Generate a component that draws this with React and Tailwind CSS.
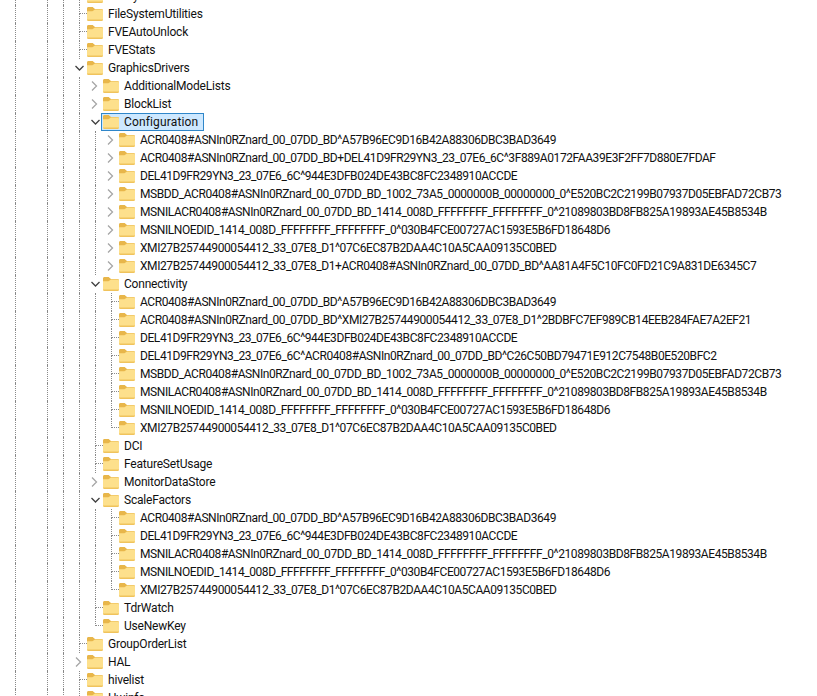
const configKeys = [
  'ACR0408#ASNIn0RZnard_00_07DD_BD^A57B96EC9D16B42A88306DBC3BAD3649',
  'ACR0408#ASNIn0RZnard_00_07DD_BD+DEL41D9FR29YN3_23_07E6_6C^3F889A0172FAA39E3F2FF7D880E7FDAF',
  'DEL41D9FR29YN3_23_07E6_6C^944E3DFB024DE43BC8FC2348910ACCDE',
  'MSBDD_ACR0408#ASNIn0RZnard_00_07DD_BD_1002_73A5_0000000B_00000000_0^E520BC2C2199B07937D05EBFAD72CB73',
  'MSNILACR0408#ASNIn0RZnard_00_07DD_BD_1414_008D_FFFFFFFF_FFFFFFFF_0^21089803BD8FB825A19893AE45B8534B',
  'MSNILNOEDID_1414_008D_FFFFFFFF_FFFFFFFF_0^030B4FCE00727AC1593E5B6FD18648D6',
  'XMI27B25744900054412_33_07E8_D1^07C6EC87B2DAA4C10A5CAA09135C0BED',
  'XMI27B25744900054412_33_07E8_D1+ACR0408#ASNIn0RZnard_00_07DD_BD^AA81A4F5C10FC0FD21C9A831DE6345C7',
];

const connectivityKeys = [
  'ACR0408#ASNIn0RZnard_00_07DD_BD^A57B96EC9D16B42A88306DBC3BAD3649',
  'ACR0408#ASNIn0RZnard_00_07DD_BD^XMI27B25744900054412_33_07E8_D1^2BDBFC7EF989CB14EEB284FAE7A2EF21',
  'DEL41D9FR29YN3_23_07E6_6C^944E3DFB024DE43BC8FC2348910ACCDE',
  'DEL41D9FR29YN3_23_07E6_6C^ACR0408#ASNIn0RZnard_00_07DD_BD^C26C50BD79471E912C7548B0E520BFC2',
  'MSBDD_ACR0408#ASNIn0RZnard_00_07DD_BD_1002_73A5_0000000B_00000000_0^E520BC2C2199B07937D05EBFAD72CB73',
  'MSNILACR0408#ASNIn0RZnard_00_07DD_BD_1414_008D_FFFFFFFF_FFFFFFFF_0^21089803BD8FB825A19893AE45B8534B',
  'MSNILNOEDID_1414_008D_FFFFFFFF_FFFFFFFF_0^030B4FCE00727AC1593E5B6FD18648D6',
  'XMI27B25744900054412_33_07E8_D1^07C6EC87B2DAA4C10A5CAA09135C0BED',
];

const scaleKeys = [
  'ACR0408#ASNIn0RZnard_00_07DD_BD^A57B96EC9D16B42A88306DBC3BAD3649',
  'DEL41D9FR29YN3_23_07E6_6C^944E3DFB024DE43BC8FC2348910ACCDE',
  'MSNILACR0408#ASNIn0RZnard_00_07DD_BD_1414_008D_FFFFFFFF_FFFFFFFF_0^21089803BD8FB825A19893AE45B8534B',
  'MSNILNOEDID_1414_008D_FFFFFFFF_FFFFFFFF_0^030B4FCE00727AC1593E5B6FD18648D6',
  'XMI27B25744900054412_33_07E8_D1^07C6EC87B2DAA4C10A5CAA09135C0BED',
];

function FolderIcon() {
  return (
    <svg width="16" height="14" viewBox="0 0 16 14" className="shrink-0">
      <path d="M0 1.5C0 .7.6 0 1.4 0h3.8c.4 0 .7.1 1 .4L8 2h6.6c.8 0 1.4.6 1.4 1.4V5H0z" fill="#e8b64a" />
      <path d="M0 4.2h5.4L8 2.6h6.6c.8 0 1.4.6 1.4 1.4v8.6c0 .8-.6 1.4-1.4 1.4H1.4C.6 14 0 13.4 0 12.6z" fill="#fde08c" />
      <path d="M0 12.4h16v.2c0 .8-.6 1.4-1.4 1.4H1.4C.6 14 0 13.4 0 12.6z" fill="#f0c35c" />
    </svg>
  );
}

function Guide({ width = 'w-4' }) {
  return <div className={`${width} h-[18px] shrink-0 border-l border-dotted border-[#8a8a8a]`} />;
}

// the little dotted elbow running from a tree line into the folder
function Connector({ last, toggle }) {
  return (
    <div className="relative w-2 h-[18px] shrink-0">
      {!toggle && (
        <>
          <div className="h-[9px] border-l border-b border-dotted border-[#8a8a8a]" />
          {!last && <div className="h-[9px] border-l border-dotted border-[#8a8a8a]" />}
        </>
      )}
      {toggle === 'open' && (
        <svg width="11" height="10" viewBox="0 0 11 10" className="absolute left-[-5px] top-1">
          <path d="M1.5 3l4 4 4-4" fill="none" stroke="#404040" strokeWidth="1.3" />
        </svg>
      )}
      {toggle === 'closed' && (
        <svg width="9" height="12" viewBox="0 0 9 12" className="absolute left-[-5px] top-[3px]">
          <path d="M2 1.5l4.5 4.5L2 10.5" fill="none" stroke="#a6a6a6" strokeWidth="1.3" />
        </svg>
      )}
    </div>
  );
}

function Row({ level, label, toggle, last, selected }) {
  return (
    <div className="flex h-[18px] items-center pl-[15px]">
      <Guide width="w-8" />
      <Guide />
      <Guide />
      {level > 0 && <Guide />}
      {level > 1 && <Guide />}
      <Connector last={last} toggle={toggle} />
      {selected ? (
        <div className="flex h-[18px] items-center -ml-[2px] pl-[1px] pr-[5px] bg-[#cde8ff] border border-[#2f86c9]">
          <FolderIcon />
          <span className="ml-[5px] text-[12px] leading-[16px] tracking-[0.15px] whitespace-nowrap">{label}</span>
        </div>
      ) : (
        <div className="flex items-center">
          <FolderIcon />
          <span className={`ml-[5px] text-[12px] leading-[18px] whitespace-nowrap ${level > 1 ? 'tracking-[-0.42px]' : 'tracking-[-0.2px]'}`}>
            {label}
          </span>
        </div>
      )}
    </div>
  );
}

export default function App() {
  return (
    <div className="h-[696px] w-[817px] overflow-hidden bg-white text-[#111] font-['Roboto','Noto_Sans',sans-serif]">
      <div className="-mt-[13px]">
        <Row level={0} label="FileSystem" />
        <Row level={0} label="FileSystemUtilities" />
        <Row level={0} label="FVEAutoUnlock" />
        <Row level={0} label="FVEStats" />
        <Row level={0} label="GraphicsDrivers" toggle="open" />
        <Row level={1} label="AdditionalModeLists" toggle="closed" />
        <Row level={1} label="BlockList" toggle="closed" />
        <Row level={1} label="Configuration" toggle="open" selected />
        {configKeys.map((k) => (
          <Row key={k} level={2} label={k} toggle="closed" />
        ))}
        <Row level={1} label="Connectivity" toggle="open" />
        {connectivityKeys.map((k, i) => (
          <Row key={k} level={2} label={k} last={i === connectivityKeys.length - 1} />
        ))}
        <Row level={1} label="DCI" />
        <Row level={1} label="FeatureSetUsage" />
        <Row level={1} label="MonitorDataStore" toggle="closed" />
        <Row level={1} label="ScaleFactors" toggle="open" />
        {scaleKeys.map((k, i) => (
          <Row key={k} level={2} label={k} last={i === scaleKeys.length - 1} />
        ))}
        <Row level={1} label="TdrWatch" />
        <Row level={1} label="UseNewKey" last />
        <Row level={0} label="GroupOrderList" />
        <Row level={0} label="HAL" toggle="closed" />
        <Row level={0} label="hivelist" />
        <Row level={0} label="Hwinfo" />
      </div>
    </div>
  );
}
